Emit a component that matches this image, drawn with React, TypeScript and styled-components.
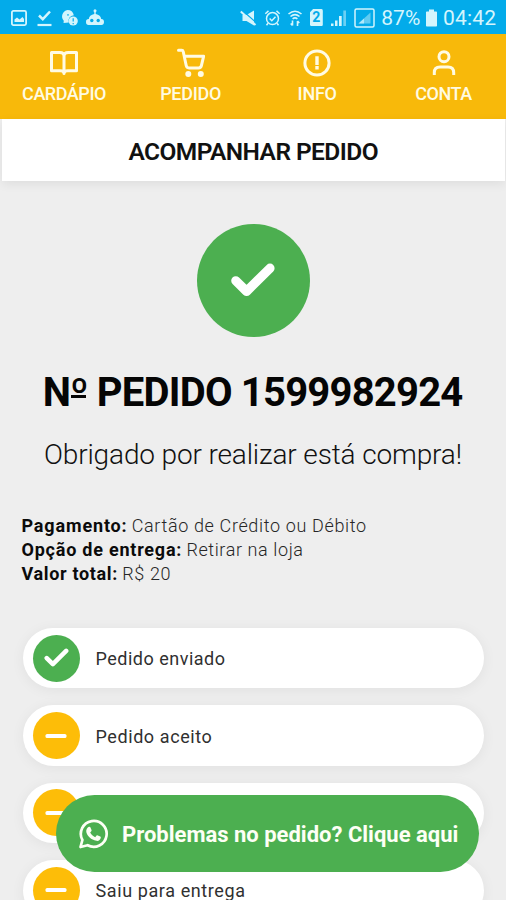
import React from 'react';
import styled, { createGlobalStyle } from 'styled-components';

const GREEN = '#4caf50';
const YELLOW = '#f8b90a';

const GlobalStyle = createGlobalStyle`
  * { box-sizing: border-box; }
  html, body { margin: 0; height: 900px; overflow: hidden; background: #eeeeee; }
  body { font-family: Roboto, 'Liberation Sans', sans-serif; color: #0b0b0b; }
`;

const Screen = styled.div`
  width: 506px;
  height: 900px;
  position: relative;
  display: flex;
  flex-direction: column;
  overflow: hidden;
  background: #eeeeee;
`;

const Text = styled.span<{ $track?: number }>`
  letter-spacing: ${(p) => p.$track ?? 0}px;
  margin-right: ${(p) => -(p.$track ?? 0)}px;
  white-space: nowrap;
`;

const StatusBar = styled.header`
  flex: none;
  height: 34px;
  padding: 1px 10px 0 9px;
  display: flex;
  align-items: center;
  justify-content: space-between;
  background: #03abea;
  color: #d4f5fd;
`;

const StatusGroup = styled.div<{ $gap: number }>`
  display: flex;
  align-items: center;
  gap: ${(p) => p.$gap}px;
  svg { display: block; flex: none; }
`;

const StatusText = styled(Text)`
  font-size: 21px;
  line-height: 24px;
`;

const Nav = styled.nav`
  flex: none;
  height: 85px;
  padding-left: 1px;
  display: grid;
  grid-template-columns: repeat(4, 126.5px);
  background: ${YELLOW};
  color: #fffbe3;
`;

const NavItem = styled.a`
  display: flex;
  flex-direction: column;
  align-items: center;
  padding-top: 14px;
  font-size: 18px;
  line-height: 21px;
  font-weight: 500;
  svg { display: block; margin-bottom: 5px; overflow: visible; }
`;

const TitleBar = styled.h1`
  flex: none;
  height: 62px;
  margin: 0 1px 0 2px;
  padding-top: 2px;
  display: flex;
  align-items: center;
  justify-content: center;
  background: #fff;
  box-shadow: 0 3px 10px rgba(0, 0, 0, 0.07);
  font-size: 24.5px;
  font-weight: 600;
  color: #111;
`;

const Summary = styled.section`
  flex: none;
  display: flex;
  flex-direction: column;
  align-items: center;
  padding-top: 43px;
`;

const Disc = styled.span<{ $size: number; $color: string }>`
  flex: none;
  width: ${(p) => p.$size}px;
  height: ${(p) => p.$size}px;
  border-radius: 50%;
  display: flex;
  align-items: center;
  justify-content: center;
  background: ${(p) => p.$color};
`;

const OrderNumber = styled.h2`
  margin: 32px 0 0;
  font-size: 40px;
  line-height: 48px;
  font-weight: 700;
  color: #050505;
`;

const Ordinal = styled.span`
  position: relative;
  &::after {
    content: '';
    position: absolute;
    left: 1px;
    right: 2px;
    bottom: 18px;
    height: 3px;
    background: currentColor;
  }
`;

const Thanks = styled.p`
  margin: 21px 0 0;
  font-size: 28px;
  line-height: 34px;
  font-weight: 300;
  color: #111;
`;

const Details = styled.dl`
  flex: none;
  margin: 42px 0 0 21.5px;
  font-size: 18px;
  line-height: 24px;
`;

const Detail = styled.div`
  display: flex;
  gap: 5px;
`;

const Term = styled.dt`
  font-weight: 700;
`;

const Value = styled.dd`
  margin: 0;
  font-weight: 300;
  color: #262626;
`;

const Steps = styled.ul`
  flex: none;
  list-style: none;
  margin: 42px 22px 0 23px;
  padding: 0;
  display: flex;
  flex-direction: column;
  gap: 17px;
`;

const Step = styled.li`
  height: 60.4px;
  border-radius: 31px;
  padding-left: 9.5px;
  display: flex;
  align-items: center;
  gap: 16px;
  background: #fff;
  box-shadow: 0 2px 14px rgba(0, 0, 0, 0.06);
  font-size: 18px;
  line-height: 22px;
  color: #303030;
`;

const StepLabel = styled(Text)`
  padding-top: 2px;
`;

const HelpButton = styled.button`
  position: absolute;
  left: 56px;
  top: 795px;
  width: 423px;
  height: 77px;
  border: 0;
  border-radius: 39px;
  padding: 1px 20px 0 23px;
  display: flex;
  align-items: center;
  gap: 13px;
  background: ${GREEN};
  color: #fdfff5;
  font: 700 22px Roboto, 'Liberation Sans', sans-serif;
  svg { flex: none; }
`;

const navStroke = {
  fill: 'none',
  stroke: 'currentColor',
  strokeWidth: 3,
  strokeLinecap: 'round' as const,
  strokeLinejoin: 'round' as const,
};

const BookIcon = () => (
  <svg width="30" height="30" viewBox="0 0 30 30" {...navStroke}>
    <path d="M2.5 4.500h8.300q4.200 0 4.200 3.800v17.200q0-2.800-3.600-2.800H2.500zM27.500 4.500h-8.300q-4.200 0-4.200 3.800v17.200q0-2.800 3.600-2.800h8.900z" />
  </svg>
);

const CartIcon = () => (
  <svg width="30" height="30" viewBox="0 0 30 30" {...navStroke}>
    <path d="M2.500 2.200h3.200q1.200 0 1.500 1.300l3 14q.5 2.400 2.800 2.400h9.600q2.300 0 2.800-2.300L27.600 8.300H8.300" />
    <circle cx="12.300" cy="26" r="1.500" fill="currentColor" />
    <circle cx="24.800" cy="26" r="1.500" fill="currentColor" />
  </svg>
);

const InfoIcon = () => (
  <svg width="30" height="30" viewBox="0 0 30 30" {...navStroke}>
    <circle cx="15" cy="15" r="12.100" />
    <path d="M15 10v5.200M15 19.700v.1" strokeWidth="3.400" strokeLinecap="square" />
  </svg>
);

const UserIcon = () => (
  <svg width="30" height="30" viewBox="0 0 30 30" {...navStroke} strokeLinecap="butt">
    <circle cx="15" cy="8.700" r="5" />
    <path d="M5.300 27v-2.200q0-5.700 5.700-5.700h8q5.700 0 5.700 5.700v2.200" />
  </svg>
);

const CheckIcon = ({ width, stroke }: { width: number; stroke: number }) => (
  <svg width={width} height={width * 0.8} viewBox="0 0 44 35.200" fill="none" stroke="#fff" strokeWidth={stroke} strokeLinecap="round" strokeLinejoin="round">
    <path d="M4.800 17.800L15.600 28.400 39 5.200" />
  </svg>
);

const MinusIcon = () => (
  <svg width="22" height="6" viewBox="0 0 22 6">
    <rect x="0.500" y="0.900" width="21" height="4.200" rx="1.600" fill="#fff" />
  </svg>
);

const WhatsAppIcon = () => (
  <svg width="30" height="30" viewBox="0 0 30 30" fill="none">
    <path d="M1.500 28l1.900-7A12.900 12.900 0 1 1 8.600 26.200z" stroke="currentColor" strokeWidth="2.700" strokeLinejoin="round" />
    <path
      fill="currentColor"
      d="M9.900 7.800c.7-.2 1.300 0 1.600.7l1 2.400c.2.500.1.900-.2 1.300l-1.100 1.300c1.100 2.200 2.800 3.700 5 4.700l1.400-1.600c.3-.4.700-.4 1.200-.2l2.500 1.200c.5.300.6.600.5 1.200-.4 2.300-2.300 3.400-4.400 3-5.300-1-9.200-4.700-10.100-8.800-.4-2.300 1-4.800 2.600-5.200z"
    />
  </svg>
);

const PictureIcon = () => (
  <svg width="20" height="18" viewBox="0 0 20 18">
    <rect x="2.900" y="1.900" width="14.200" height="14.200" rx="1.500" fill="none" stroke="currentColor" strokeWidth="1.800" />
    <path d="M5.500 13v-2.500l2.500-2 2.500 2 3-2.500 1.500 2v3z" fill="currentColor" />
  </svg>
);

const DownloadDoneIcon = () => (
  <svg width="17" height="18" viewBox="0 0 17 18" fill="none" stroke="currentColor">
    <path d="M3 6.500l3.800 3.700L14 2.500" strokeWidth="2.500" />
    <path d="M1.500 16h14" strokeWidth="2.200" />
  </svg>
);

const ChatAlertIcon = () => (
  <svg width="18" height="18" viewBox="0 0 18 18" fill="currentColor">
    <path d="M7.500 1a6.500 6.500 0 0 1 6.300 5.200 5.500 5.500 0 0 0-5 7.300L3.500 14l.3-2.200A6.500 6.500 0 0 1 7.500 1z" />
    <circle cx="13.200" cy="12" r="4.600" />
    <path d="M13.200 9.300v3.300M13.200 14v1.200M8 5v1.800" stroke="#03abea" strokeWidth="1.200" />
  </svg>
);

const RobotIcon = () => (
  <svg width="20" height="18" viewBox="0 0 20 18" fill="currentColor">
    <circle cx="10" cy="1.800" r="1.500" />
    <path d="M9.300 2h1.400v3C14 5.500 16 7.500 16.200 10c2 0 2.800 1.200 2.800 3S18 16 16.500 16h-13C2 16 1 15.300 1 13s.8-3 2.800-3C4 7.500 6 5.500 9.300 5z" />
    <circle cx="6.800" cy="11.500" r="1.700" fill="#03abea" />
    <circle cx="13.200" cy="11.500" r="1.700" fill="#03abea" />
  </svg>
);

const MuteIcon = () => (
  <svg width="17" height="18" viewBox="0 0 17 18" fill="currentColor">
    <path d="M2.500 6h4L14 1.500v15L6.500 12h-4z" />
    <path d="M2.500 1.500l14 12.500" stroke="#03abea" strokeWidth="1.200" />
    <path d="M.8 2.500l14.700 13.500" stroke="currentColor" strokeWidth="2" />
  </svg>
);

const AlarmIcon = () => (
  <svg width="17" height="18" viewBox="0 0 17 18" fill="none" stroke="currentColor" strokeWidth="1.500">
    <circle cx="8.500" cy="9.600" r="6" />
    <path d="M5.600 9.500l2.200 2.200 3.700-4M1.300 4.800l3.200-2.900M15.700 4.800l-3.200-2.900M4 14.300l-1.500 2M13 14.300l1.500 2" />
  </svg>
);

const WifiIcon = () => (
  <svg width="16" height="18" viewBox="0 0 16 18" fill="none" stroke="currentColor" strokeWidth="1.600">
    <path d="M1.500 5q6.500-5.500 13 0M3.500 7.500q4.500-3.800 9 0M5.600 9.800q2.400-1.800 4.800 0" />
    <path d="M5.500 11.500v5M3.700 14.500l1.800 2M10.500 17v-5M12.300 14l-1.800-2" />
  </svg>
);

const SimShape = styled.span`
  width: 13px;
  height: 17px;
  border-radius: 1.5px;
  display: flex;
  align-items: center;
  justify-content: center;
  background: currentColor;
  clip-path: polygon(25% 0, 100% 0, 100% 100%, 0 100%, 0 20%);
`;

const SimNumber = styled.span`
  font-size: 14px;
  font-weight: 700;
  line-height: 17px;
  color: #03abea;
`;

const SignalIcon = () => (
  <svg width="18" height="18" viewBox="0 0 18 18" fill="currentColor">
    <path d="M2 14.500h2.500V17H2zM6 11.500h2.500V17H6zM10 7h2.700v10H10z" />
    <path d="M14.300 1.500H17V17h-2.700z" opacity="0.500" />
  </svg>
);

const BoxedSignalIcon = () => (
  <svg width="21" height="20" viewBox="0 0 21 20">
    <rect x="1" y="1" width="19" height="18" rx="1.500" fill="none" stroke="currentColor" strokeWidth="1.500" />
    <path d="M4.500 15.500L16.500 4.500v11z" fill="currentColor" opacity="0.450" />
    <path d="M4.500 15.500l5.500-5v5z" fill="currentColor" opacity="0.700" />
  </svg>
);

const BatteryIcon = () => (
  <svg width="13" height="18" viewBox="0 0 13 18" fill="currentColor">
    <path d="M4 .5h5v2h2.200q.8 0 .8.800v13.400q0 .8-.8.800H1.800q-.8 0-.8-.8V3.300q0-.8.800-.8H4z" />
  </svg>
);

const navItems = [
  { label: 'CARDÁPIO', Icon: BookIcon, track: -0.45 },
  { label: 'PEDIDO', Icon: CartIcon, track: -0.3 },
  { label: 'INFO', Icon: InfoIcon, track: -0.3 },
  { label: 'CONTA', Icon: UserIcon, track: -0.45 },
];

const details = [
  { term: 'Pagamento:', termTrack: 0.85, value: 'Cartão de Crédito ou Débito', track: 0.64 },
  { term: 'Opção de entrega:', termTrack: 0.77, value: 'Retirar na loja', track: 0.6 },
  { term: 'Valor total:', termTrack: 0.66, value: 'R$ 20', track: 0.6 },
];

const steps = [
  { label: 'Pedido enviado', done: true, track: 0.5 },
  { label: 'Pedido aceito', done: false, track: 0.58 },
  { label: '', done: false, track: 0 },
  { label: 'Saiu para entrega', done: false, track: 0.6 },
];

export default function App() {
  return (
    <Screen>
      <GlobalStyle />
      <StatusBar>
        <StatusGroup $gap={7}>
          <PictureIcon />
          <DownloadDoneIcon />
          <ChatAlertIcon />
          <RobotIcon />
        </StatusGroup>
        <StatusGroup $gap={6.5}>
          <MuteIcon />
          <AlarmIcon />
          <WifiIcon />
          <SimShape>
            <SimNumber>2</SimNumber>
          </SimShape>
          <SignalIcon />
          <BoxedSignalIcon />
          <StatusGroup $gap={4.8}>
            <StatusText>87%</StatusText>
            <BatteryIcon />
            <StatusText $track={0.2}>04:42</StatusText>
          </StatusGroup>
        </StatusGroup>
      </StatusBar>

      <Nav>
        {navItems.map(({ label, Icon, track }) => (
          <NavItem key={label}>
            <Icon />
            <Text $track={track}>{label}</Text>
          </NavItem>
        ))}
      </Nav>

      <TitleBar>
        <Text $track={-0.55}>ACOMPANHAR PEDIDO</Text>
      </TitleBar>

      <Summary>
        <Disc $size={113} $color={GREEN}>
          <CheckIcon width={44} stroke={9.2} />
        </Disc>
        <OrderNumber>
          <Text $track={-0.78}>
            N<Ordinal>º</Ordinal> PEDIDO 1599982924
          </Text>
        </OrderNumber>
        <Thanks>
          <Text $track={-0.14}>Obrigado por realizar está compra!</Text>
        </Thanks>
      </Summary>

      <Details>
        {details.map((d) => (
          <Detail key={d.term}>
            <Term>
              <Text $track={d.termTrack}>{d.term}</Text>
            </Term>
            <Value>
              <Text $track={d.track}>{d.value}</Text>
            </Value>
          </Detail>
        ))}
      </Details>

      <Steps>
        {steps.map((s, i) => (
          <Step key={i}>
            <Disc $size={47} $color={s.done ? GREEN : '#fdbd08'}>
              {s.done ? <CheckIcon width={25} stroke={8} /> : <MinusIcon />}
            </Disc>
            <StepLabel $track={s.track}>{s.label}</StepLabel>
          </Step>
        ))}
      </Steps>

      <HelpButton>
        <WhatsAppIcon />
        <Text>Problemas no pedido? Clique aqui</Text>
      </HelpButton>
    </Screen>
  );
}
